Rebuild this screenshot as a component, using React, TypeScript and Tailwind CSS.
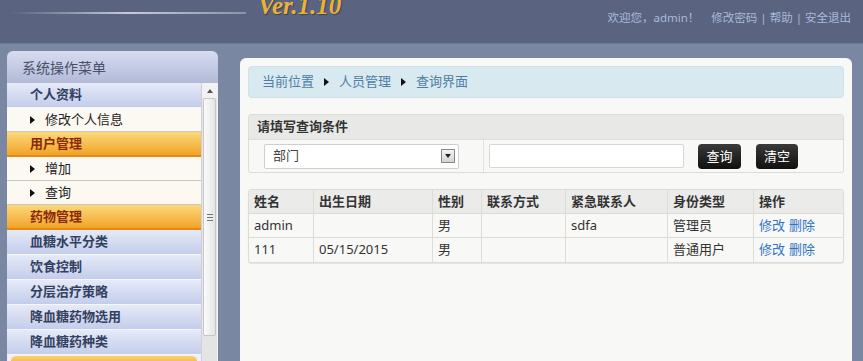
import React from 'react';

const font = { fontFamily: '"Noto Sans", "Noto Sans CJK SC", sans-serif' };

const Tri: React.FC<{ className?: string }> = ({ className = '' }) => (
  <span className={`inline-block w-0 h-0 border-y-[4px] border-y-transparent border-l-[5px] border-l-[#111] ${className}`} />
);

type MenuKind = 'blue' | 'sub' | 'orange';

const menu: { label: string; kind: MenuKind }[] = [
  { label: '个人资料', kind: 'blue' },
  { label: '修改个人信息', kind: 'sub' },
  { label: '用户管理', kind: 'orange' },
  { label: '增加', kind: 'sub' },
  { label: '查询', kind: 'sub' },
  { label: '药物管理', kind: 'orange' },
  { label: '血糖水平分类', kind: 'blue' },
  { label: '饮食控制', kind: 'blue' },
  { label: '分层治疗策略', kind: 'blue' },
  { label: '降血糖药物选用', kind: 'blue' },
  { label: '降血糖药种类', kind: 'blue' },
];

const rowStyle: Record<MenuKind, string> = {
  sub: 'h-[24px] bg-[#fcf9f2] border-b border-[#c9c9c4] text-[#222] font-normal',
  orange: 'h-[25px] bg-gradient-to-b from-[#fcd878] to-[#f0a420] border-b-2 border-[#e58a1a] text-[#8a2a08] font-bold',
  blue: 'h-[25px] bg-gradient-to-b from-[#e6eaf8] to-[#c3cdeb] border-b border-[#f4f6fc] text-[#33405e] font-bold',
};

const MenuItem: React.FC<{ label: string; kind: MenuKind }> = ({ label, kind }) => (
  <div className={`flex items-center pl-[23px] text-[13px] ${rowStyle[kind]}`}>
    {kind === 'sub' && <Tri className="mr-[10px]" />}
    <span>{label}</span>
  </div>
);

const Sidebar: React.FC = () => (
  <div className="w-[211px] ml-[7px] mt-[7px] flex flex-col shrink-0">
    <div className="h-[32px] rounded-t-[6px] bg-gradient-to-b from-[#d8dcf0] to-[#b2bad8] flex items-center pl-[15px] text-[14px] text-[#4a5069]">
      系统操作菜单
    </div>
    <div className="flex bg-[#eef0f8]">
      <div className="w-[194px] flex flex-col">
        {menu.map((m) => (
          <MenuItem key={m.label} label={m.label} kind={m.kind} />
        ))}
        <div className="mt-[1px] mx-[4px] h-[10px] rounded-t-[5px] bg-gradient-to-b from-[#fbd070] to-[#f2ad2e]" />
      </div>
      {/* scrollbar */}
      <div className="w-[16px] bg-[#e8e8e8] border-l border-[#d0d0d0] flex flex-col">
        <div className="h-[15px] flex items-center justify-center bg-[#f2f2f2]">
          <span className="w-0 h-0 border-x-[3px] border-x-transparent border-b-[4px] border-b-[#555]" />
        </div>
        <div className="h-[238px] mx-[1px] rounded-[2px] bg-gradient-to-r from-[#fbfbfb] to-[#e4e4e4] border border-[#c6c6c6] flex items-center justify-center">
          <div className="flex flex-col gap-[2px]">
            <span className="w-[6px] h-px bg-[#777]" />
            <span className="w-[6px] h-px bg-[#777]" />
            <span className="w-[6px] h-px bg-[#777]" />
          </div>
        </div>
        <div className="flex-1 bg-[#e4e4e4]" />
      </div>
    </div>
  </div>
);

const cols = [
  { h: '姓名', w: 'w-[65px]' },
  { h: '出生日期', w: 'w-[119px]' },
  { h: '性别', w: 'w-[49px]' },
  { h: '联系方式', w: 'w-[84px]' },
  { h: '紧急联系人', w: 'w-[102px]' },
  { h: '身份类型', w: 'w-[86px]' },
  { h: '操作', w: 'flex-1' },
];

const rows = [
  ['admin', '', '男', '', 'sdfa', '管理员'],
  ['111', '05/15/2015', '男', '', '', '普通用户'],
];

const Main: React.FC = () => (
  <div className="ml-[22px] mt-[14px] w-[612px] h-[303px] rounded-t-[6px] bg-[#f8f8f6] px-[8px] pt-[8px]">
    <div className="h-[32px] rounded-[4px] bg-[#d8e9f0] border border-[#cde2ea] flex items-center pl-[13px] text-[13px] text-[#4e7ea6]">
      当前位置
      <Tri className="mx-[10px]" />
      人员管理
      <Tri className="mx-[10px]" />
      查询界面
    </div>

    <div className="mt-[16px] rounded-[3px] border border-[#dcdcd8] bg-[#f8f8f6]">
      <div className="h-[25px] bg-[#e8e9e6] border-b border-[#dcdcd8] flex items-center pl-[8px] text-[13px] font-bold text-[#333]">
        请填写查询条件
      </div>
      <div className="h-[32px] flex items-center">
        <div className="w-[235px] h-full flex items-center pl-[15px] border-r border-[#e2e2de]">
          <div className="w-[195px] h-[25px] bg-white border border-[#cfcfcf] rounded-[2px] flex items-center justify-between pl-[8px] pr-[3px] text-[13px] text-[#444]">
            部门
            <span className="w-[14px] h-[14px] border border-[#888] bg-gradient-to-b from-[#f4f4f4] to-[#d4d4d4] flex items-center justify-center">
              <span className="w-0 h-0 border-x-[3px] border-x-transparent border-t-[4px] border-t-[#222]" />
            </span>
          </div>
        </div>
        <div className="ml-[5px] w-[195px] h-[24px] bg-white border border-[#d6d6d6] rounded-[2px]" />
        <button className="ml-[14px] w-[43px] h-[25px] rounded-[4px] bg-gradient-to-b from-[#3a3a3a] to-[#111] text-white text-[13px] leading-none">
          查询
        </button>
        <button className="ml-[15px] w-[42px] h-[25px] rounded-[4px] bg-gradient-to-b from-[#3a3a3a] to-[#111] text-white text-[13px] leading-none">
          清空
        </button>
      </div>
    </div>

    <div className="mt-[16px] rounded-[3px] border border-[#dcdcd8] bg-[#f8f8f6] text-[13px] text-[#333] shadow-[0_1px_1px_rgba(0,0,0,0.08)]">
      <div className="h-[24px] flex bg-[#ebebea] border-b border-[#dcdcd8] font-bold">
        {cols.map((c, i) => (
          <div key={c.h} className={`${c.w} flex items-center pl-[5px] ${i < cols.length - 1 ? 'border-r border-[#dcdcd8]' : ''}`}>
            {c.h}
          </div>
        ))}
      </div>
      {rows.map((r, ri) => (
        <div key={ri} className={`h-[24px] flex ${ri === 0 ? 'border-b border-[#dcdcd8]' : ''}`}>
          {r.map((cell, ci) => (
            <div key={ci} className={`${cols[ci].w} flex items-center pl-[5px] border-r border-[#dcdcd8]`}>
              {cell}
            </div>
          ))}
          <div className="flex-1 flex items-center pl-[5px] gap-[4px] text-[#2f74c4]">
            <span>修改</span>
            <span>删除</span>
          </div>
        </div>
      ))}
    </div>
  </div>
);

const App: React.FC = () => (
  <div className="w-[863px] h-[361px] overflow-hidden bg-[#7a87a2] flex flex-col" style={font}>
    <div className="h-[44px] shrink-0 bg-[#5a6480] border-b border-[#6e7a96] flex">
      <div className="flex items-start">
        <div className="mt-[12px] ml-[10px] w-[236px] h-[2px] bg-gradient-to-r from-[#5a6480] via-[#c9ccd4] to-[#8a93a8]" />
        <div
          className="ml-[12px] -mt-[7px] text-[25px] italic font-bold text-[#e9b23a] leading-none"
          style={{ fontFamily: '"Liberation Serif", serif', textShadow: '1px 1px 1px #3c4258' }}
        >
          Ver.1.10
        </div>
      </div>
      <div className="ml-auto mr-[12px] mt-[9px] text-[11.5px] text-[#a9b9da] leading-[18px]">
        欢迎您，admin！<span className="ml-[12px]">修改密码 | 帮助 | 安全退出</span>
      </div>
    </div>
    <div className="flex flex-1">
      <Sidebar />
      <Main />
    </div>
  </div>
);

export default App;
